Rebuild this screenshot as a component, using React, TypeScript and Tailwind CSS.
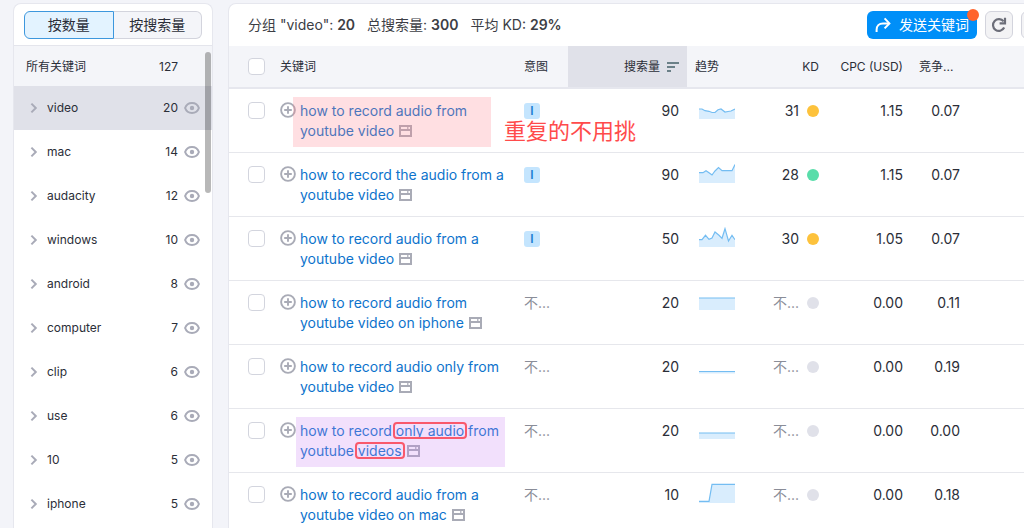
import React from 'react';

type Point = [number, number];

interface Keyword {
  lines: React.ReactNode[];
  label: string;
  intent?: string;
  volume: number;
  trend: Point[];
  base?: number;
  kd?: number;
  kdColor: string;
  cpc: string;
  comp: string;
  highlight?: string;
  note?: string;
}

const groups = [
  { name: 'video', count: 20 },
  { name: 'mac', count: 14 },
  { name: 'audacity', count: 12 },
  { name: 'windows', count: 10 },
  { name: 'android', count: 8 },
  { name: 'computer', count: 7 },
  { name: 'clip', count: 6 },
  { name: 'use', count: 6 },
  { name: '10', count: 5 },
  { name: 'iphone', count: 5 },
];

const Marked = ({ children }: { children: React.ReactNode }) => (
  <span className="relative">
    {children}
    <span className="absolute -inset-x-[3px] inset-y-0 z-10 rounded-[4px] border-2 border-[#f9596c]" />
  </span>
);

const keywords: Keyword[] = [
  {
    lines: ['how to record audio from', 'youtube video'],
    label: 'how to record audio from youtube video',
    intent: 'I',
    volume: 90,
    trend: [[0, 10], [3, 10], [6, 11.7], [10, 12.3], [13, 13.5], [16, 13.5], [19, 10.7], [22, 10], [26, 13], [29, 12.5], [32, 12], [36, 10]],
    kd: 31,
    kdColor: 'bg-[#fdc23c]',
    cpc: '1.15',
    comp: '0.07',
    highlight: '-left-[7px] right-[17px] bg-[#ff7f8b]/25',
    note: '重复的不用挑',
  },
  {
    lines: ['how to record the audio from a', 'youtube video'],
    label: 'how to record the audio from a youtube video',
    intent: 'I',
    volume: 90,
    trend: [[0, 9.7], [4, 9.7], [7, 7.7], [10, 9.7], [13, 12], [16, 8], [19.5, 4.5], [23, 7.7], [33, 7.7], [36, 1.5]],
    kd: 28,
    kdColor: 'bg-[#59ddaa]',
    cpc: '1.15',
    comp: '0.07',
  },
  {
    lines: ['how to record audio from a', 'youtube video'],
    label: 'how to record audio from a youtube video',
    intent: 'I',
    volume: 50,
    trend: [[0, 12.7], [3, 12.7], [6.5, 8.3], [10, 12.3], [13, 11], [16, 5], [20, 8.3], [23, 11.3], [26, 1.7], [29.5, 14], [33, 8.3], [36, 12.7]],
    kd: 30,
    kdColor: 'bg-[#fdc23c]',
    cpc: '1.05',
    comp: '0.07',
  },
  {
    lines: ['how to record audio from', 'youtube video on iphone'],
    label: 'how to record audio from youtube video on iphone',
    volume: 20,
    trend: [[0, 7], [36, 7]],
    base: 19,
    kdColor: 'bg-[#e0e1e9]',
    cpc: '0.00',
    comp: '0.11',
  },
  {
    lines: ['how to record audio only from', 'youtube video'],
    label: 'how to record audio only from youtube video',
    volume: 20,
    trend: [[0, 16.5], [36, 16.5]],
    base: 18.5,
    kdColor: 'bg-[#e0e1e9]',
    cpc: '0.00',
    comp: '0.19',
  },
  {
    lines: [
      <>how to record <Marked>only audio</Marked> from</>,
      <>youtube <Marked>videos</Marked></>,
    ],
    label: 'how to record only audio from youtube videos',
    volume: 20,
    trend: [[0, 14], [36, 14]],
    kdColor: 'bg-[#e0e1e9]',
    cpc: '0.00',
    comp: '0.00',
    highlight: '-left-1 right-[3px] bg-[#cb83f3]/25',
  },
  {
    lines: ['how to record audio from a', 'youtube video on mac'],
    label: 'how to record audio from a youtube video on mac',
    volume: 10,
    trend: [[0, 18.3], [10, 18.3], [13, 1.3], [36, 1.3]],
    kdColor: 'bg-[#e0e1e9]',
    cpc: '0.00',
    comp: '0.18',
  },
];

const EyeIcon = () => (
  <svg viewBox="0 0 16 12" className="h-3 w-4" fill="none">
    <path d="M1.1 6C2.2 2.8 4.8 1.1 8 1.1S13.8 2.8 14.9 6C13.8 9.2 11.2 10.9 8 10.9S2.2 9.2 1.1 6Z" stroke="#a9abb8" strokeWidth="2" />
    <circle cx="8" cy="6" r="2.2" fill="#a9abb8" />
  </svg>
);

const ChevronIcon = () => (
  <svg viewBox="0 0 8 12" className="h-3 w-2" fill="none">
    <path d="M1.4 1.6 5.8 6 1.4 10.4" stroke="#a9abb8" strokeWidth="2" />
  </svg>
);

const PlusIcon = () => (
  <svg viewBox="0 0 16 16" className="h-4 w-4" fill="none" stroke="#a9abb6">
    <circle cx="8" cy="8" r="6.9" strokeWidth="1.9" />
    <path d="M8 4.2v7.6M4.2 8h7.6" strokeWidth="1.9" />
  </svg>
);

const SerpIcon = () => (
  <svg viewBox="0 0 13 12" className="ml-[5px] inline-block h-3 w-[13px] align-[-1px]" fill="none" stroke="#a9abb6">
    <path d="M1 1h11v10H1ZM1 5h11" strokeWidth="2" />
    <path d="M8.8 1v3.6" strokeWidth="1.2" />
  </svg>
);

const SortIcon = () => (
  <svg viewBox="0 0 12 10" className="h-[10px] w-3" fill="none">
    <path d="M0 1h12M0 5h8M0 9h4" stroke="#6b8088" strokeWidth="2" />
  </svg>
);

const ShareIcon = () => (
  <svg viewBox="0 0 16 16" className="h-4 w-4" fill="none" stroke="#fff" strokeWidth="2">
    <path d="M1.6 15v-2.2C1.6 9 4 6.4 8 6.4h6" />
    <path d="m9.6 1.4 4.8 5-4.8 5" />
  </svg>
);

const RefreshIcon = () => (
  <svg viewBox="0 0 16 16" className="h-4 w-4" fill="none" stroke="#6c6e79" strokeWidth="2.2">
    <path d="M13.2 10.6A5.9 5.9 0 1 1 12.6 4.4" />
    <path d="M14 .8v5.6H8.6" />
  </svg>
);

const Sparkline = ({ points, base = 20 }: { points: Point[]; base?: number }) => {
  const line = points.map(([x, y]) => `${x},${y}`).join(' ');
  return (
    <svg viewBox="0 0 36 20" className="h-5 w-9">
      <polygon points={`0,${base} ${line} 36,${base}`} fill="#d9edfd" />
      <polyline points={line} fill="none" stroke="#74bdf2" strokeWidth="1.2" />
    </svg>
  );
};

const Checkbox = ({ label }: { label: string }) => (
  <input
    type="checkbox"
    aria-label={label}
    className="block h-[17px] w-[17px] appearance-none rounded-[4px] border border-[#d3d5de] bg-white"
  />
);

const Sidebar = () => (
  <aside className="relative w-50 shrink-0 overflow-hidden rounded-t-lg border border-b-0 border-[#e6e7ee] bg-white">
    <div className="flex border-b border-[#e4e5ec] px-[10px] pt-[7px] pb-[6px] text-sm">
      <button className="h-7 flex-1 rounded-l-md border border-[#3d97dd] bg-[#e3f3ff]">按数量</button>
      <button className="h-7 flex-1 rounded-r-md border border-l-0 border-[#d3d4dd] bg-[#f4f5f9]">按搜索量</button>
    </div>
    <div className="flex h-10 items-center justify-between bg-[#f4f5f9] pt-px pr-[34px] pl-3 text-xs">
      <span>所有关键词</span>
      <span>127</span>
    </div>
    <ul className="text-xs">
      {groups.map((group, index) => (
        <li
          key={group.name}
          className={`flex h-11 items-center pr-3 pl-4 ${index === 0 ? 'bg-[#e0e1e9]' : ''}`}
        >
          <ChevronIcon />
          <span className="ml-[9px] flex-1">{group.name}</span>
          <span className="mr-[6px]">{group.count}</span>
          <EyeIcon />
        </li>
      ))}
    </ul>
    <div className="absolute top-12 right-px h-[141px] w-[6px] rounded-full bg-black/28" />
  </aside>
);

const Toolbar = () => (
  <div className="flex h-[42px] items-center pr-[2px] pl-[19px]">
    <div className="flex flex-1 gap-3 text-sm text-[#3c3e45]">
      <span>分组 "video": <b className="font-semibold">20</b></span>
      <span>总搜索量: <b className="font-semibold">300</b></span>
      <span>平均 KD: <b className="font-semibold">29%</b></span>
    </div>
    <div className="flex gap-2">
      <button className="relative flex h-7 items-center gap-2 rounded-md bg-[#008ff8] px-2 text-sm text-white">
        <ShareIcon />
        发送关键词
        <span className="absolute -top-[2px] -right-[2px] h-3 w-3 rounded-full bg-[#ff642d]" />
      </button>
      <button aria-label="刷新" className="flex h-7 w-7 items-center justify-center rounded-md border border-[#d3d4dd] bg-[#f3f3f5]">
        <RefreshIcon />
      </button>
      <button aria-label="设置" className="h-7 w-7 rounded-md border border-[#d3d4dd] bg-[#f3f3f5]" />
    </div>
  </div>
);

const KeywordRow = ({ item }: { item: Keyword }) => (
  <tr className="h-16 border-b border-[#e6e7ec] align-top">
    <td className="pt-[13px] pl-[19px]"><Checkbox label={item.label} /></td>
    <td className="pt-3">
      <div className="flex gap-1">
        <button aria-label="添加" className="mt-px h-4 w-4 shrink-0"><PlusIcon /></button>
        <div className="relative mr-2 flex-1">
          <a href="#" className="block leading-5 text-[#0d73cc]">
            {item.lines[0]}
            <br />
            {item.lines[1]}
            <SerpIcon />
          </a>
          {item.highlight && <div className={`absolute -top-1 -bottom-[6px] ${item.highlight}`} />}
        </div>
      </div>
    </td>
    <td className="relative pt-3 pl-2 text-[#8a8d98]">
      {item.intent ? (
        <span className="mt-[2px] flex h-4 w-4 items-center justify-center rounded-[3px] bg-[#c4e5fe] text-xs font-semibold text-[#1c7fd1]">
          {item.intent}
        </span>
      ) : '不...'}
      {item.note && (
        <span className="absolute top-[26px] -left-3 z-10 text-[22px] leading-8 whitespace-nowrap text-[#ff4b4b]">{item.note}</span>
      )}
    </td>
    <td className="pt-3 pr-2 text-right">{item.volume}</td>
    <td className="pt-[10px] pl-3"><Sparkline points={item.trend} base={item.base} /></td>
    <td className="pt-3 pr-2">
      <div className="flex items-center justify-end gap-2">
        {item.kd ?? <span className="text-[#8a8d98]">不...</span>}
        <span className={`h-3 w-3 rounded-full ${item.kdColor}`} />
      </div>
    </td>
    <td className="pt-3 pr-2 text-right">{item.cpc}</td>
    <td className="pt-3 pr-2 text-right">{item.comp}</td>
    <td />
  </tr>
);

const KeywordTable = () => (
  <table className="w-full table-fixed border-collapse text-sm leading-5">
    <colgroup>
      <col className="w-[51px]" />
      <col className="w-[236px]" />
      <col className="w-[52px]" />
      <col className="w-[119px]" />
      <col className="w-16" />
      <col className="w-[76px]" />
      <col className="w-[84px]" />
      <col className="w-[57px]" />
      <col />
    </colgroup>
    <thead>
      <tr className="h-[42px] border-b-2 border-[#e6e7ee] bg-[#f4f5f9] text-left text-xs [&>th]:font-normal">
        <th className="pl-[19px]"><Checkbox label="全选" /></th>
        <th>关键词</th>
        <th className="pl-2">意图</th>
        <th className="bg-[#e0e1e9] pr-2">
          <div className="flex items-center justify-end gap-[7px]">搜索量<SortIcon /></div>
        </th>
        <th className="pl-2">趋势</th>
        <th className="pr-2 text-right">KD</th>
        <th className="pr-2 text-right">CPC (USD)</th>
        <th className="pl-2">竞争...</th>
        <th />
      </tr>
    </thead>
    <tbody>
      {keywords.map((item) => (
        <KeywordRow key={item.label} item={item} />
      ))}
    </tbody>
  </table>
);

const App = () => {
  return (
    <div className="flex h-screen gap-[15px] overflow-hidden bg-[#f3f4f9] pt-[3px] pl-[13px] font-['Inter','Noto_Sans_CJK_SC',sans-serif] text-[#2b2e38]">
      <Sidebar />
      {/* the card runs past the right edge of the window */}
      <main className="-mr-7 flex-1 overflow-hidden rounded-t-lg border border-b-0 border-[#e6e7ee] bg-white">
        <Toolbar />
        <KeywordTable />
      </main>
    </div>
  );
};

export default App;
